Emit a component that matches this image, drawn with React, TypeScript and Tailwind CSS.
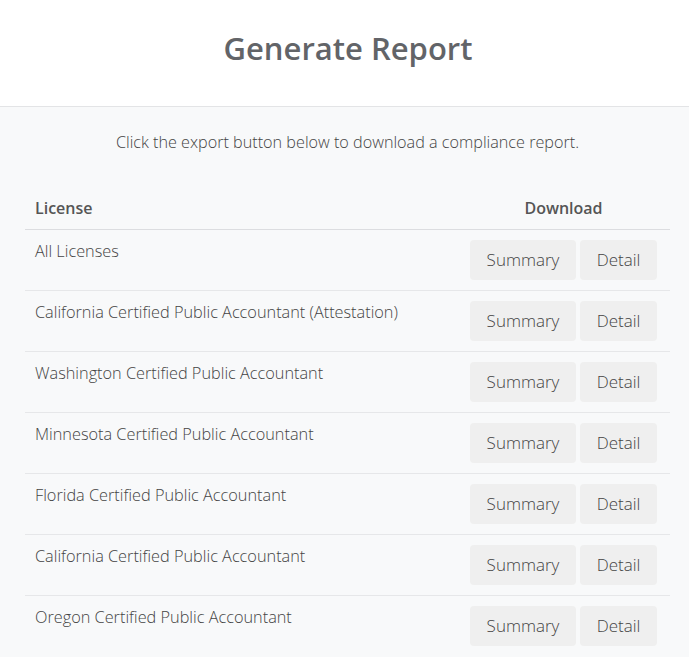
import React from "react";

const licenses = [
  "All Licenses",
  "California Certified Public Accountant (Attestation)",
  "Washington Certified Public Accountant",
  "Minnesota Certified Public Accountant",
  "Florida Certified Public Accountant",
  "California Certified Public Accountant",
  "Oregon Certified Public Accountant",
];

export default function App() {
  return (
    <div className="min-h-screen bg-[#f8f9fa] font-['Open_Sans',sans-serif] text-[#555]">
      <header className="h-[107px] bg-white border-b border-[#e3e4e6] pt-[27px] pl-[7px]">
        <h1 className="text-center text-[31px] leading-[42px] font-semibold text-[#626468]">Generate Report</h1>
      </header>

      <div className="px-[25px] pt-[23px]">
        <p className="text-center text-[16.2px] leading-[24px] font-light text-[#444] pl-[6px]">
          Click the export button below to download a compliance report.
        </p>

        <table className="w-[645px] mt-[31px] border-collapse">
          <thead>
            <tr className="border-b border-[#dcdde0]">
              <th className="text-left font-semibold text-[16px] leading-[24px] px-[10px] pt-[11px] pb-[9px]">License</th>
              <th className="text-center font-semibold text-[16px] leading-[24px] pl-[10px] pr-[13px] pt-[11px] pb-[9px]">Download</th>
            </tr>
          </thead>
          <tbody>
            {licenses.map((name) => (
              <tr key={name} className="border-b border-[#e6e7e9] last:border-b-0">
                <td className="align-top text-[16.3px] leading-[24px] font-light text-[#444] px-[10px] pt-[9px] pb-[10px]">{name}</td>
                <td className="align-top w-[200px] pl-[10px] pr-[13px] pt-[10px] pb-[10px]">
                  <div className="flex justify-end gap-[4px]">
                    <button className="w-[106px] h-[40px] rounded-[4px] bg-[#efefef] text-[17px] font-light text-[#444]">Summary</button>
                    <button className="w-[77px] h-[40px] rounded-[4px] bg-[#efefef] text-[17px] font-light text-[#444]">Detail</button>
                  </div>
                </td>
              </tr>
            ))}
          </tbody>
        </table>
      </div>
    </div>
  );
}
